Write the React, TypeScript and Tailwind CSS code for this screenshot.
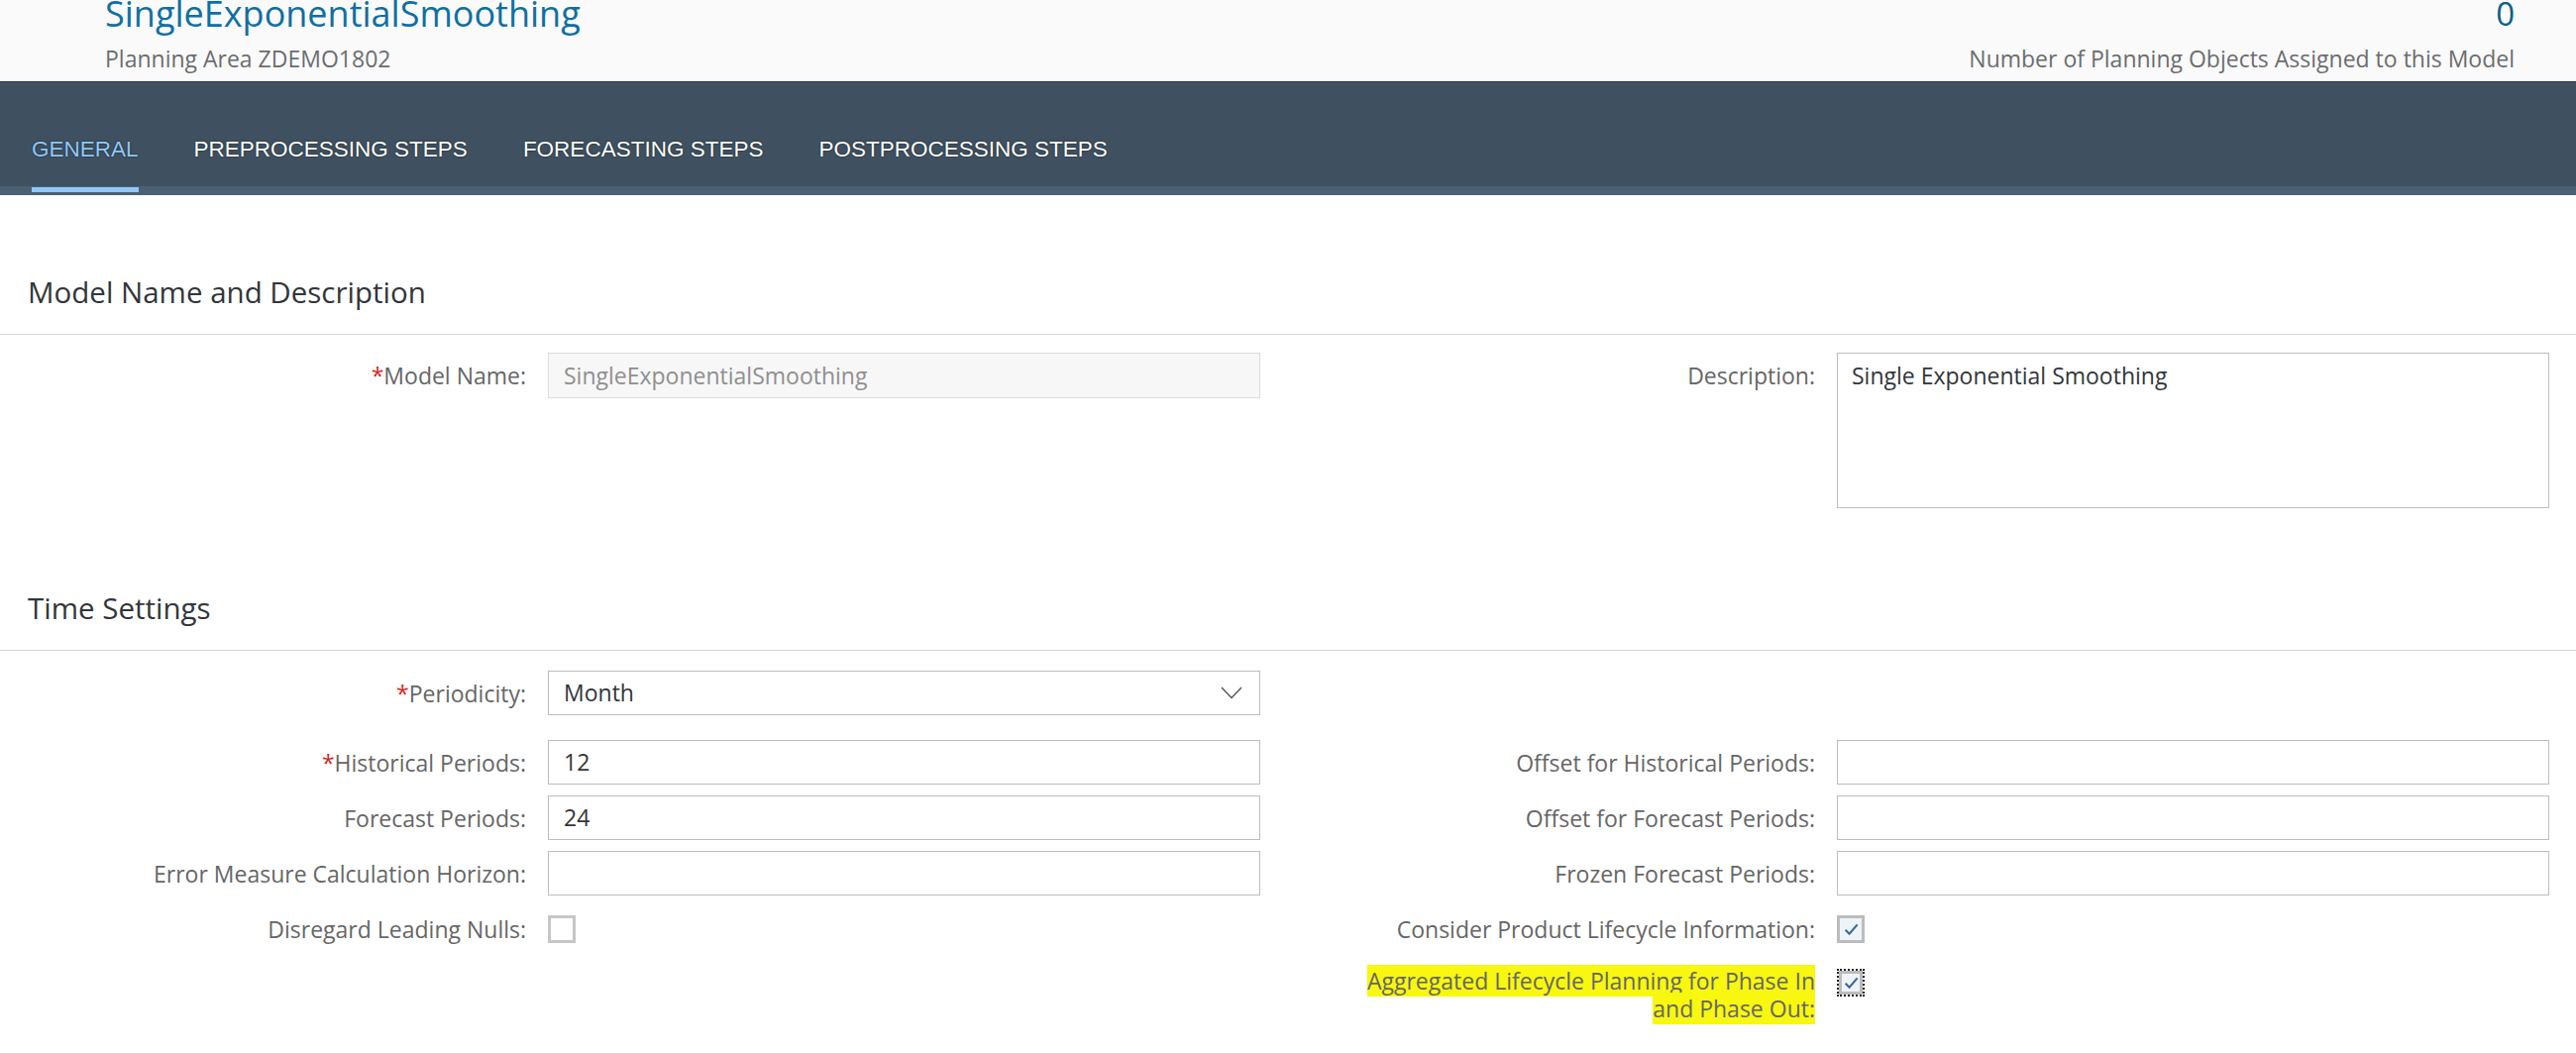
import React from "react";

const LABEL =
  "w-[531px] shrink-0 text-right text-[23px] leading-[28px] text-[#666666]";

function Label({ text, required }: { text: string; required?: boolean }) {
  return (
    <div className={LABEL}>
      {required && <span className="text-[#d0271d]">*</span>}
      {text}
    </div>
  );
}

function Field({ value, muted }: { value?: string; muted?: boolean }) {
  return (
    <div
      className={
        muted
          ? "w-[719px] h-[46px] border border-[#dcdcdc] bg-[#f7f7f7] flex items-center px-[15px] text-[23px] text-[#8f8f8f]"
          : "w-[719px] h-[45px] border border-[#bdbdbd] bg-white flex items-center px-[15px] text-[23px] text-[#32363a]"
      }
    >
      {value}
    </div>
  );
}

function Check({ checked, focused }: { checked?: boolean; focused?: boolean }) {
  const box = (
    <div
      className={
        checked
          ? "w-full h-full border-[3px] border-[#bcbcbc] bg-[#eef3f7] flex items-center justify-center"
          : "w-full h-full border-[3px] border-[#c6c6c6] bg-white"
      }
    >
      {checked && (
        <svg width="17" height="17" viewBox="0 0 16 16">
          <path
            d="M2.5 8.2 L6.2 12 L13.8 3.2"
            fill="none"
            stroke="#3b6a96"
            strokeWidth="2"
          />
        </svg>
      )}
    </div>
  );
  return focused ? (
    <div className="w-[28px] h-[28px] border-2 border-dotted border-[#222222]">
      {box}
    </div>
  ) : (
    <div className="w-[28px] h-[28px]">{box}</div>
  );
}

function Row({
  children,
  className,
}: {
  children: React.ReactNode;
  className?: string;
}) {
  return (
    <div className={"flex items-center gap-[22px] " + (className ?? "")}>
      {children}
    </div>
  );
}

export default function App() {
  return (
    <div className="w-[2600px] h-[1063px] overflow-hidden bg-white font-['Open_Sans',sans-serif]">
      {/* Object header */}
      <div className="h-[83px] bg-[#fafafa] border-b border-[#2a3845] flex justify-between pl-[106px] pr-[62px] overflow-hidden">
        <div>
          <div className="text-[36px] leading-[40px] mt-[-6px] text-[#0f6fa3]">
            SingleExponentialSmoothing
          </div>
          <div className="text-[23px] leading-[28px] mt-[11px] text-[#6a6d70]">
            Planning Area ZDEMO1802
          </div>
        </div>
        <div className="text-right">
          <div className="text-[33px] leading-[40px] mt-[-6px] text-[#0b5f88]">
            0
          </div>
          <div className="text-[23px] leading-[28px] mt-[11px] text-[#6a6d70]">
            Number of Planning Objects Assigned to this Model
          </div>
        </div>
      </div>

      {/* Tab bar */}
      <div className="relative h-[114px] bg-[#3f5161]">
        <div className="absolute inset-x-0 bottom-0 h-[9px] bg-[#4b6072]" />
        <div className="relative flex gap-[56px] pl-[32px] h-full font-['Liberation_Sans',Arial,sans-serif] text-[22.5px] leading-[26px] [text-shadow:0_0_2px_rgba(0,0,0,0.7)]">
          <div className="relative h-full pt-[55px] text-[#91c8f6]">
            GENERAL
            <div className="absolute left-0 right-0 bottom-[3px] h-[5px] bg-[#91c8f6]" />
          </div>
          <div className="h-full pt-[55px] text-white">PREPROCESSING STEPS</div>
          <div className="h-full pt-[55px] text-white">FORECASTING STEPS</div>
          <div className="h-full pt-[55px] text-white">POSTPROCESSING STEPS</div>
        </div>
      </div>

      {/* Section: Model Name and Description */}
      <div className="mt-[78px] pl-[28px] text-[29.5px] leading-[40px] text-[#32363a]">
        Model Name and Description
      </div>
      <div className="mt-[22px] h-[1px] bg-[#d6d6d6]" />
      <div className="mt-[18px] flex">
        <div className="w-[1301px] shrink-0">
          <Row>
            <Label text="Model Name:" required />
            <Field value="SingleExponentialSmoothing" muted />
          </Row>
        </div>
        <div className="flex items-start gap-[22px]">
          <div className={LABEL + " pt-[9px]"}>Description:</div>
          <div className="w-[719px] h-[157px] border border-[#bdbdbd] bg-white px-[14px] pt-[8px] text-[23px] leading-[28px] text-[#32363a]">
            Single Exponential Smoothing
          </div>
        </div>
      </div>

      {/* Section: Time Settings */}
      <div className="mt-[81px] pl-[28px] text-[29.5px] leading-[40px] text-[#32363a]">
        Time Settings
      </div>
      <div className="mt-[22px] h-[1px] bg-[#d6d6d6]" />
      <div className="mt-[20px] flex">
        <div className="w-[1301px] shrink-0 flex flex-col">
          <Row className="mb-[25px]">
            <Label text="Periodicity:" required />
            <div className="w-[719px] h-[45px] border border-[#bdbdbd] bg-white flex items-center justify-between pl-[15px] pr-[17px] text-[23px] text-[#32363a]">
              <span>Month</span>
              <svg width="22" height="13" viewBox="0 0 22 13">
                <path
                  d="M1 1 L11 11.5 L21 1"
                  fill="none"
                  stroke="#55595c"
                  strokeWidth="1.5"
                />
              </svg>
            </div>
          </Row>
          <Row className="mb-[11px]">
            <Label text="Historical Periods:" required />
            <Field value="12" />
          </Row>
          <Row className="mb-[11px]">
            <Label text="Forecast Periods:" />
            <Field value="24" />
          </Row>
          <Row className="mb-[20px]">
            <Label text="Error Measure Calculation Horizon:" />
            <Field />
          </Row>
          <Row>
            <Label text="Disregard Leading Nulls:" />
            <Check />
          </Row>
        </div>
        <div className="flex flex-col">
          <div className="h-[45px] mb-[25px]" />
          <Row className="mb-[11px]">
            <Label text="Offset for Historical Periods:" />
            <Field />
          </Row>
          <Row className="mb-[11px]">
            <Label text="Offset for Forecast Periods:" />
            <Field />
          </Row>
          <Row className="mb-[20px]">
            <Label text="Frozen Forecast Periods:" />
            <Field />
          </Row>
          <Row className="mb-[26px]">
            <Label text="Consider Product Lifecycle Information:" />
            <Check checked />
          </Row>
          <div className="flex items-start gap-[22px]">
            <div className={LABEL + " mt-[-2px]"}>
              <span className="bg-[#f7f70f]">
                Aggregated Lifecycle Planning for Phase In
              </span>
              <br />
              <span className="bg-[#f7f70f]">and Phase Out:</span>
            </div>
            <Check checked focused />
          </div>
        </div>
      </div>
    </div>
  );
}
